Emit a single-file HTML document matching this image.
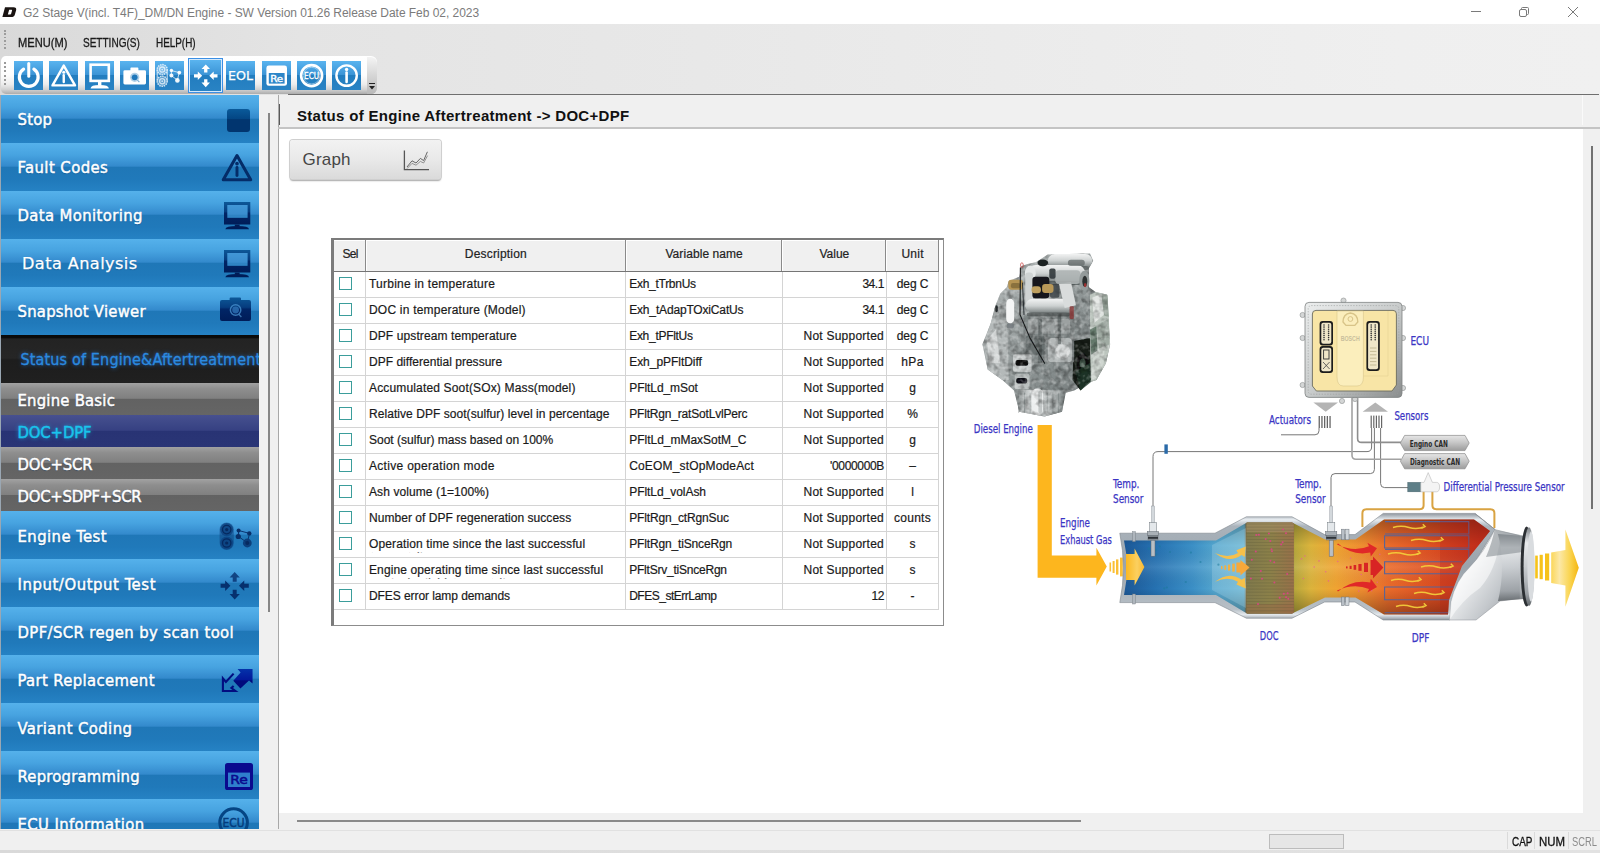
<!DOCTYPE html>
<html lang="en">
<head>
<meta charset="utf-8">
<title>G2 Stage V(incl. T4F)_DM/DN Engine</title>
<style>
*{box-sizing:border-box;margin:0;padding:0}
html,body{width:1600px;height:853px;overflow:hidden;background:#f0f0f0;font-family:"Liberation Sans","DejaVu Sans",sans-serif;}
.abs{position:absolute}
svg{display:block;overflow:visible}
#win{position:relative;width:1600px;height:853px;overflow:hidden;background:#f0f0f0}
#titlebar{left:0;top:0;width:1600px;height:24px;background:#fff}
#titletext{left:23px;top:6px;font-size:12px;line-height:15px;color:#7b7b7b;white-space:nowrap;letter-spacing:-0.042px}
#menubar{left:0;top:24px;width:1600px;height:71px;background:linear-gradient(to right,#d9d9d9 0,#e4e4e4 300px,#efefef 1400px,#f0f0f0 1600px)}
.menu{top:36px;font-size:12px;line-height:15px;color:#1a1a1a;white-space:nowrap;transform-origin:0 0;-webkit-text-stroke:0.3px #1a1a1a}
#toolbar{left:1px;top:56px;width:376px;height:38px;border-radius:5px 6px 6px 5px;background:linear-gradient(to bottom,#ffffff 0,#fdfdfd 50%,#ededed 74%,#d2d2d2 88%,#acacac 100%)}
.tb{top:61px;width:29px;height:29px;background:linear-gradient(to bottom,#5ab4ef 0,#3a93d5 49%,#227dbf 50%,#2983c4 100%)}
#sidebar{left:0;top:95px;width:259px;height:734px;overflow:hidden;background:#2380c2}
.it{left:0;width:259px;height:48px;background:linear-gradient(to bottom,#55b1eb 0,#47a3e0 25%,#3389cc 48.5%,#1f77b7 50%,#2079ba 75%,#2682c4 100%)}
.it span,.sub span{position:absolute;left:17.5px;white-space:nowrap;color:#fff;font-family:'DejaVu Sans Condensed','DejaVu Sans',sans-serif;font-size:16.5px;line-height:20px;top:15.4px;-webkit-text-stroke:.45px #fff;text-shadow:0 1px 1px rgba(0,40,90,.3)}
.sub{left:0;width:259px;height:32.3px;background:linear-gradient(to bottom,#a2a2a2 0,#8e8e8e 18%,#808080 48%,#626262 50%,#656565 100%)}
.sub span{top:7.8px}
.it svg{position:absolute}
.th{font-size:12px;line-height:15px;color:#222;-webkit-text-stroke:.2px #222;text-align:center;white-space:nowrap}
.td{font-size:12px;line-height:15px;color:#1a1a1a;-webkit-text-stroke:.2px #1a1a1a;white-space:nowrap}
.cb{width:13px;height:13px;border:1.4px solid #3b9d9b;background:#fff}
.sb{top:834.6px;font-size:12px;line-height:15px;white-space:nowrap;transform-origin:0 0}
/*MORECSS*/
</style>
</head>
<body>
<div id="win">
<div id="titlebar" class="abs"></div>
<svg class="abs" style="left:2px;top:6.2px" width="16" height="12.2" viewBox="0 0 17 13" preserveAspectRatio="none"><path d="M3.2 1.2 H12.2 Q15.8 1.2 15 4.4 L13.7 9 Q12.9 11.8 9.6 11.8 H0.4 Z M7.6 3.9 L6.2 9.1 H8.7 Q9.5 9.1 9.7 8.3 L10.7 4.7 Q10.9 3.9 10.1 3.9 Z" fill="#1a1412" fill-rule="evenodd"/></svg>
<div id="titletext" class="abs">G2 Stage V(incl. T4F)_DM/DN Engine - SW Version 01.26 Release Date Feb 02, 2023</div>
<svg class="abs" style="left:1460px;top:0" width="140" height="24" viewBox="0 0 140 24"><g fill="none" stroke="#7a7a7a" stroke-width="1"><path d="M11 11.5 H21"/><rect x="59.5" y="9.5" width="7" height="7" rx="1.5"/><path d="M61.5 9 V8.5 Q61.5 7.5 62.5 7.5 H67.5 Q68.5 7.5 68.5 8.5 V13.5 Q68.5 14.5 67.5 14.5 H67"/><path d="M108 7 L118 17 M118 7 L108 17"/></g></svg>
<div id="menubar" class="abs"></div>
<div class="abs" style="left:4.4px;top:29.6px;width:2px;height:19px;background:repeating-linear-gradient(to bottom,#9c9c9c 0,#9c9c9c 1.6px,transparent 1.6px,transparent 3.4px)"></div>
<div class="abs menu" id="m1" style="left:18px;transform:scaleX(.927)">MENU(M)</div>
<div class="abs menu" id="m2" style="left:83.4px;transform:scaleX(.835)">SETTING(S)</div>
<div class="abs menu" id="m3" style="left:156.4px;transform:scaleX(.825)">HELP(H)</div>
<div id="toolbar" class="abs"></div>
<div class="abs" style="left:367px;top:57px;width:10px;height:37px;border-radius:0 6px 6px 0;background:linear-gradient(to bottom,#f4f4f4 0,#dcdcdc 40%,#b9b9b9 100%)"></div>
<div class="abs" style="left:4.4px;top:62.4px;width:2px;height:23px;background:repeating-linear-gradient(to bottom,#9a9a9a 0,#9a9a9a 2px,transparent 2px,transparent 4.2px)"></div>
<svg class="abs" style="left:368px;top:83px" width="8" height="8" viewBox="0 0 8 8"><path d="M1 0.5 H7" stroke="#222" stroke-width="1"/><path d="M1 3 H7 L4 6.5 Z" fill="#222"/></svg>
<div class="abs tb" style="left:13.5px"></div>
<svg class="abs" style="left:13.5px;top:61px" width="29" height="29" viewBox="0 0 29 29"><path d="M9.6 8.2 A9.4 9.4 0 1 0 19.9 8.2" fill="none" stroke="#ffffff" stroke-width="3.2" stroke-linecap="round"/><path d="M14.75 2.6 V15.2" stroke="#ffffff" stroke-width="3" stroke-linecap="round"/></svg>
<div class="abs tb" style="left:49px"></div>
<svg class="abs" style="left:49px;top:61px" width="29" height="29" viewBox="0 0 29 29"><path d="M14.75 4.6 L26 24.4 H3.5 Z" fill="none" stroke="#ffffff" stroke-width="2.4" stroke-linejoin="round"/><circle cx="14.75" cy="11.2" r="1.5" fill="#ffffff"/><path d="M14.75 14.3 V21" stroke="#ffffff" stroke-width="2.4" stroke-linecap="round"/></svg>
<div class="abs tb" style="left:84.5px"></div>
<svg class="abs" style="left:84.5px;top:61px" width="29" height="29" viewBox="0 0 29 29"><rect x="5.6" y="3.7" width="18.2" height="16.2" fill="none" stroke="#ffffff" stroke-width="2.6"/><rect x="13" y="21" width="3.4" height="3.6" fill="#ffffff"/><path d="M5.6 27.4 Q5.6 24 14.7 24 Q23.8 24 23.8 27.4 Z" fill="#ffffff"/></svg>
<div class="abs tb" style="left:119.75px"></div>
<svg class="abs" style="left:119.75px;top:61px" width="29" height="29" viewBox="0 0 29 29"><path d="M10.4 9.2 V7.4 Q10.4 6.6 11.2 6.6 H17.6 Q18.4 6.6 18.4 7.4 V9.2 H24.6 Q26 9.2 26 10.6 V22 Q26 23.4 24.6 23.4 H4.8 Q3.4 23.4 3.4 22 V10.6 Q3.4 9.2 4.8 9.2 Z" fill="#ffffff"/><circle cx="14.7" cy="16.3" r="4.6" fill="#1f78bb" opacity=".35"/><circle cx="14.7" cy="16.3" r="2.9" fill="#1f78bb"/><path d="M17.6 19.4 L19.4 21.2" stroke="#1f78bb" stroke-width="1.2" opacity=".6"/></svg>
<div class="abs tb" style="left:155px"></div>
<svg class="abs" style="left:155px;top:61px" width="29" height="29" viewBox="0 0 29 29"><g fill="none" stroke="#ffffff" opacity="0.78"><circle cx="7.2" cy="8.6" r="5" fill="#ffffff" fill-opacity=".35" stroke-width="1.5" stroke-dasharray="1.5 .8"/><circle cx="7.2" cy="8.6" r="2.6" stroke-width="1.3"/><circle cx="7.2" cy="8.6" r="0.9" fill="#ffffff" stroke="none"/><circle cx="7.2" cy="20.2" r="5" fill="#ffffff" fill-opacity=".35" stroke-width="1.5" stroke-dasharray="1.5 .8"/><circle cx="7.2" cy="20.2" r="2.6" stroke-width="1.3"/><circle cx="7.2" cy="20.2" r="0.9" fill="#ffffff" stroke="none"/><path d="M2.2 8.6 V20.2 M12.2 8.6 V20.2" stroke-width="1"/><path d="M16.4 9.6 L24.2 11.6 M16.4 14.6 L22.4 19.2 M16.4 9.6 V14.6 M24.2 11.6 L22.4 19.2" stroke-width="0.9"/></g><g fill="#ffffff" opacity="0.93"><circle cx="16.4" cy="9.4" r="1.7"/><circle cx="16.4" cy="14.6" r="2"/><circle cx="24.3" cy="11.6" r="1.9"/><circle cx="22.4" cy="19.4" r="2.3"/></g></svg>
<div class="abs" style="left:187.5px;top:57.5px;width:35.5px;height:35.5px;border:1.5px solid #3c8fe4;background:#d5e9fb"></div>
<div class="abs tb" style="left:190px;top:60px;width:30.5px;height:30.5px"></div>
<svg class="abs" style="left:190.75px;top:60.75px" width="29" height="29" viewBox="0 0 29 29"><path d="M14.75 3.4 L19 8 H16.4 V11.4 H13.1 V8 H10.5 Z" fill="#ffffff" opacity="1"/><path d="M14.75 26.2 L19 21.6 H16.4 V18.2 H13.1 V21.6 H10.5 Z" fill="#ffffff"/><path d="M11.2 14.8 L6.8 10.5 V13.15 H3 V16.45 H6.8 V19.1 Z" fill="#ffffff"/><path d="M18.3 14.8 L22.7 10.5 V13.15 H26.5 V16.45 H22.7 V19.1 Z" fill="#ffffff"/></svg>
<div class="abs tb" style="left:226px"></div>
<svg class="abs" style="left:226px;top:61px" width="29" height="29" viewBox="0 0 29 29"><text x="14.6" y="19.2" text-anchor="middle" font-family="DejaVu Sans,Liberation Sans,sans-serif" font-size="12.5" textLength="25" lengthAdjust="spacingAndGlyphs" fill="#ffffff" stroke="#ffffff" stroke-width=".25">EOL</text></svg>
<div class="abs tb" style="left:261.5px"></div>
<svg class="abs" style="left:261.5px;top:61px" width="29" height="29" viewBox="0 0 29 29"><rect x="4.4" y="4.6" width="20.6" height="20.2" rx="2.4" fill="#ffffff"/><rect x="6.8" y="12" width="15.8" height="10.6" fill="#2d86c8"/><text x="14.7" y="20.6" text-anchor="middle" font-family="DejaVu Sans,Liberation Sans,sans-serif" font-size="8.8" textLength="13" lengthAdjust="spacingAndGlyphs" fill="#ffffff" stroke="#ffffff" stroke-width=".35">Re</text></svg>
<div class="abs tb" style="left:297px"></div>
<svg class="abs" style="left:297px;top:61px" width="29" height="29" viewBox="0 0 29 29"><circle cx="14.6" cy="14.6" r="10.5" fill="none" stroke="#ffffff" stroke-width="2.6"/><circle cx="14.6" cy="14.6" r="8.3" fill="none" stroke="#ffffff" stroke-width="0.6" opacity=".7"/><text x="14.6" y="17.7" text-anchor="middle" font-family="DejaVu Sans,Liberation Sans,sans-serif" font-size="8.4" textLength="15" lengthAdjust="spacingAndGlyphs" fill="#ffffff" stroke="#ffffff" stroke-width=".35">ECU</text></svg>
<div class="abs tb" style="left:332.25px"></div>
<svg class="abs" style="left:332.25px;top:61px" width="29" height="29" viewBox="0 0 29 29"><circle cx="14.6" cy="14.6" r="10.2" fill="none" stroke="#ffffff" stroke-width="2.4"/><circle cx="14.6" cy="8.4" r="1.7" fill="#ffffff"/><path d="M14.6 11.6 V21" stroke="#ffffff" stroke-width="2.6" stroke-linecap="round"/></svg>
<div id="sidebar" class="abs">
<div class="abs it" style="top:0px"><svg style="left:227px;top:14px" width="23" height="23" viewBox="0 0 23 23"><defs><linearGradient id="gstop" x1="0" y1="0" x2="0" y2="1"><stop offset="0" stop-color="#0a5a9a"/><stop offset=".44" stop-color="#034583"/><stop offset=".46" stop-color="#01356f"/><stop offset="1" stop-color="#01356f"/></linearGradient></defs><rect width="23" height="23" rx="3" fill="url(#gstop)"/></svg><span style="letter-spacing:0.21px">Stop</span></div>
<div class="abs it" style="top:48px"><svg style="left:219px;top:6.8px" width="35.38" height="35.38" viewBox="0 0 29 29"><path d="M14.75 4.6 L26 24.4 H3.5 Z" fill="none" stroke="#042c68" stroke-width="2.5" stroke-linejoin="round"/><circle cx="14.75" cy="11.2" r="1.5" fill="#042c68"/><path d="M14.75 14.3 V21" stroke="#042c68" stroke-width="2.4" stroke-linecap="round"/></svg><span style="letter-spacing:0.44px">Fault Codes</span></div>
<div class="abs it" style="top:96px"><svg style="left:223.7px;top:11.2px" width="26.30" height="27.20" viewBox="0 0 26.3 27.2"><defs><linearGradient id="gdk" x1="0" y1="0" x2="0" y2="1"><stop offset="0" stop-color="#0d5898"/><stop offset=".42" stop-color="#063c7e"/><stop offset=".5" stop-color="#012566"/><stop offset="1" stop-color="#001c58"/></linearGradient></defs><path d="M0 0 H26.3 V22.6 H0 Z M3.4 3.1 V15.8 H23.5 V3.1 Z" fill="url(#gdk)" fill-rule="evenodd"/><rect x="3.4" y="3.1" width="20.1" height="12.7" fill="#3f8fd0" opacity=".5"/><rect x="10.8" y="22.6" width="4.8" height="2" fill="#001c58"/><path d="M1.4 27.2 Q1.4 24 13.2 24 Q25 24 25 27.2 Z" fill="#001c58"/></svg><span style="letter-spacing:0.38px">Data Monitoring</span></div>
<div class="abs it" style="top:144px"><svg style="left:223.7px;top:11.2px" width="26.30" height="27.20" viewBox="0 0 26.3 27.2"><path d="M0 0 H26.3 V22.6 H0 Z M3.4 3.1 V15.8 H23.5 V3.1 Z" fill="url(#gdk)" fill-rule="evenodd"/><rect x="3.4" y="3.1" width="20.1" height="12.7" fill="#3f8fd0" opacity=".5"/><rect x="10.8" y="22.6" width="4.8" height="2" fill="#001c58"/><path d="M1.4 27.2 Q1.4 24 13.2 24 Q25 24 25 27.2 Z" fill="#001c58"/></svg><span style="left:22px;top:15px;font-family:'DejaVu Sans',sans-serif;font-size:16.1px;letter-spacing:.44px;-webkit-text-stroke:.25px #fff">Data Analysis</span></div>
<div class="abs it" style="top:192px"><svg style="left:220.4px;top:10.4px" width="31.00" height="24.00" viewBox="0 0 31 24"><path d="M9.6 3 V1.4 Q9.6 0.4 10.6 0.4 H20 Q21 0.4 21 1.4 V3 H29 Q31 3 31 5 V22 Q31 24 29 24 H2 Q0 24 0 22 V5 Q0 3 2 3 Z" fill="url(#gdk)"/><circle cx="15.6" cy="13" r="5.2" fill="none" stroke="#4a94d2" stroke-width="1.5" opacity=".75"/><circle cx="15.6" cy="13" r="3.4" fill="#2f74b8" opacity=".8"/><path d="M19 17.5 L21.4 20" stroke="#5aa2dc" stroke-width="1.4" opacity=".6"/></svg><span style="letter-spacing:0.25px">Snapshot Viewer</span></div>
<div class="abs" style="left:0;top:240px;width:259px;height:47.5px;background:linear-gradient(to bottom,#0a0a0a 0,#0c0c0c 6%,#232323 8%,#262626 48%,#1d1d1d 52%,#202020 100%)"><span id="sthead" style="position:absolute;left:20.5px;top:14.5px;letter-spacing:.15px;-webkit-text-stroke:.3px #2b8ae0;font-family:'DejaVu Sans Condensed','DejaVu Sans',sans-serif;font-size:16px;line-height:20px;white-space:nowrap;color:#2b8ae0;text-shadow:0 0 4px rgba(40,140,240,.8)">Status of Engine&amp;Aftertreatment</span></div>
<div class="abs sub" style="top:288px"><span style="letter-spacing:0.22px">Engine Basic</span></div>
<div class="abs sub" style="top:320.1px;background:linear-gradient(to bottom,#47508f 0,#3c4787 30%,#364082 48%,#283374 50%,#2a3576 100%)"><span style="color:#19c4ec;-webkit-text-stroke:.45px #19c4ec;text-shadow:0 0 4px rgba(30,200,250,.8);letter-spacing:-0.12px">DOC+DPF</span></div>
<div class="abs sub" style="top:352.2px"><span style="letter-spacing:-0.15px">DOC+SCR</span></div>
<div class="abs sub" style="top:384.3px"><span style="letter-spacing:-0.24px">DOC+SDPF+SCR</span></div>
<div class="abs it" style="top:416.4px"><svg style="left:218px;top:10px" width="36.00" height="30.00" viewBox="0 0 36 30"><g transform="translate(-218 -521)"><rect x="219.6" y="522.4" width="14.2" height="27.6" rx="7.1" fill="#0a3c78" opacity=".45"/><circle cx="226.7" cy="529.6" r="6.5" fill="#0b3f7e" opacity=".75"/><circle cx="226.7" cy="529.6" r="4.2" fill="none" stroke="#062a60" stroke-width="1.3"/><circle cx="226.7" cy="529.6" r="1.6" fill="#062a60"/><circle cx="226.7" cy="543" r="6.5" fill="#0b3f7e" opacity=".75"/><circle cx="226.7" cy="543" r="4.2" fill="none" stroke="#062a60" stroke-width="1.3"/><circle cx="226.7" cy="543" r="1.6" fill="#062a60"/><path d="M238.6 530.5 L249.5 533.4 L247.3 542.8 L238.3 536.3 Z M238.6 530.5 V536.3" fill="none" stroke="#0a3570" stroke-width="1"/><circle cx="238.6" cy="530.5" r="2" fill="#08306a"/><circle cx="249.3" cy="533.4" r="2.2" fill="#08306a"/><circle cx="238.3" cy="536.5" r="2.6" fill="#08306a"/><circle cx="247.3" cy="543" r="4.4" fill="#0a3874" opacity=".9"/><circle cx="247.3" cy="543" r="2" fill="#062a60"/></g></svg><span style="letter-spacing:0.44px">Engine Test</span></div>
<div class="abs it" style="top:464.4px"><svg style="left:217.3px;top:8.2px" width="34.80" height="34.80" viewBox="0 0 29 29"><path d="M14.75 3.4 L19 8 H16.4 V11.4 H13.1 V8 H10.5 Z" fill="#06306e" opacity="0.8"/><path d="M14.75 26.2 L19 21.6 H16.4 V18.2 H13.1 V21.6 H10.5 Z" fill="#06306e"/><path d="M11.2 14.8 L6.8 10.5 V13.15 H3 V16.45 H6.8 V19.1 Z" fill="#06306e"/><path d="M18.3 14.8 L22.7 10.5 V13.15 H26.5 V16.45 H22.7 V19.1 Z" fill="#06306e"/></svg><span style="letter-spacing:0.58px">Input/Output Test</span></div>
<div class="abs it" style="top:512.4px"><span style="letter-spacing:0.39px">DPF/SCR regen by scan tool</span></div>
<div class="abs it" style="top:560.4px"><svg style="left:221px;top:12.4px" width="32.00" height="26.00" viewBox="0 0 32 26"><defs><linearGradient id="gpart" x1="0" y1="0" x2="0" y2="1"><stop offset="0" stop-color="#0432aa"/><stop offset=".55" stop-color="#02189a"/><stop offset=".6" stop-color="#000a7c"/><stop offset="1" stop-color="#000a7c"/></linearGradient></defs><path d="M16.55 1.1 H31.55 V15.6 L28 12.6 L19.4 20.6 L12.3 12.8 L19.6 4.6 Z" fill="url(#gpart)"/><path d="M12.6 5.6 L4.9 14 L1.9 10.4 V23 H14.4 L10.4 20 L12.6 18" fill="none" stroke="#020c80" stroke-width="2.1" stroke-linejoin="miter"/></svg><span style="letter-spacing:0.37px">Part Replacement</span></div>
<div class="abs it" style="top:608.4px"><span style="letter-spacing:0.41px">Variant Coding</span></div>
<div class="abs it" style="top:656.4px"><svg style="left:225px;top:11.6px" width="28.00" height="27.00" viewBox="0 0 28 27"><rect x="0" y="0" width="28" height="27" rx="2.6" fill="#0a0a8e"/><rect x="3" y="9.6" width="22" height="14.4" fill="#2f7fcc"/><text x="14" y="21" text-anchor="middle" font-family="DejaVu Sans,Liberation Sans,sans-serif" font-size="11.5" textLength="17.6" lengthAdjust="spacingAndGlyphs" fill="#0a0a8e" stroke="#0a0a8e" stroke-width=".5">Re</text></svg><span style="letter-spacing:0.22px">Reprogramming</span></div>
<div class="abs it" style="top:704.4px"><svg style="left:218px;top:8px" width="32.00" height="32.00" viewBox="0 0 32 32"><circle cx="15.6" cy="15.6" r="13.8" fill="none" stroke="#054584" stroke-width="3"/><text x="15.6" y="20.4" text-anchor="middle" font-family="DejaVu Sans,Liberation Sans,sans-serif" font-size="12.4" textLength="22" lengthAdjust="spacingAndGlyphs" fill="#043c7c" stroke="#043c7c" stroke-width=".5">ECU</text></svg><span style="letter-spacing:0.39px">ECU Information</span></div>
</div>
<div class="abs" style="left:0;top:95px;width:1px;height:734px;background:#9aa7b3"></div>
<div class="abs" style="left:267.5px;top:113px;width:2px;height:499px;background:#868686"></div>
<div class="abs" style="left:288px;top:94px;width:1311px;height:1.4px;background:#6f6f6f"></div>
<div class="abs" style="left:278px;top:95px;width:1px;height:734px;background:#a8a8a8"></div>
<div class="abs" style="left:279px;top:104px;width:1.4px;height:21px;background:#5a5a5a"></div>
<div class="abs" style="left:1582px;top:95px;width:1px;height:30px;background:#fafafa"></div>
<div id="hdr" class="abs" style="left:297px;top:107px;font-size:15px;line-height:18px;font-weight:bold;color:#111;white-space:nowrap;letter-spacing:.31px">Status of Engine Aftertreatment -&gt; DOC+DPF</div>
<div class="abs" style="left:278px;top:127px;width:1322px;height:2px;background:#c4c4c4"></div>
<div class="abs" style="left:279px;top:128.9px;width:1304px;height:684.6px;background:#fff"></div>
<div class="abs" style="left:1590.5px;top:146px;width:2px;height:363px;background:#727272"></div>
<div class="abs" style="left:297px;top:820px;width:784px;height:2px;background:#8a8a8a"></div>
<div class="abs" style="left:290px;top:139.5px;width:151px;height:39.6px;border-radius:3px;background:linear-gradient(to bottom,#f2f2f2 0,#e9e9e9 50%,#dadada 100%);box-shadow:0 0 0 1px #cfcfcf,0 1.5px 1.5px rgba(0,0,0,.35)"></div>
<div id="graph" class="abs" style="left:302.5px;top:150px;font-size:17px;line-height:20px;color:#454545;white-space:nowrap;letter-spacing:.2px">Graph</div>
<svg class="abs" style="left:403px;top:150px" width="27" height="21" viewBox="0 0 27 21"><path d="M1.4 0.6 V19.6 H26" fill="none" stroke="#555" stroke-width="1.3"/><path d="M4 17 L9 10.8 L13 13 L17.4 8.4 L20.6 10.6 L24.4 1.8" fill="none" stroke="#666" stroke-width="1"/><path d="M4 18.6 L9 13.4 L13 15.2 L17.4 11.4 L20.6 13 L24.6 5.6" fill="none" stroke="#888" stroke-width=".9"/></svg>
<div class="abs" style="left:331.2px;top:237.9px;width:612.6px;height:388.5px;background:#fff;border-style:solid;border-color:#7b7b7b #8c8c8c #8c8c8c #7b7b7b;border-width:2.9px 1.5px 1.5px 3.1px"></div>
<div class="abs" style="left:334.3px;top:240.8px;width:604.5px;height:30.2px;background:#f0f0f0"></div>
<div class="abs" style="left:334.3px;top:270.9px;width:604.5px;height:1.3px;background:#757575"></div>
<div class="abs th" style="left:334.3px;width:31.599999999999966px;top:246.5px;letter-spacing:-0.68px">Sel</div>
<div class="abs th" style="left:365.9px;width:260.0px;top:246.5px;letter-spacing:0.19px">Description</div>
<div class="abs th" style="left:625.9px;width:156.5px;top:246.5px;letter-spacing:0.07px">Variable name</div>
<div class="abs th" style="left:782.4px;width:104.0px;top:246.5px;letter-spacing:0px">Value</div>
<div class="abs th" style="left:886.4px;width:52.39999999999998px;top:246.5px;letter-spacing:0.24px">Unit</div>
<div class="abs" style="left:364.7px;top:240px;width:1.2px;height:31px;background:#8a8a8a"></div><div class="abs" style="left:365.9px;top:240px;width:1px;height:31px;background:#fff"></div>
<div class="abs" style="left:365.29999999999995px;top:272px;width:1px;height:338px;background:#d4d4d4"></div>
<div class="abs" style="left:624.6999999999999px;top:240px;width:1.2px;height:31px;background:#8a8a8a"></div><div class="abs" style="left:625.9px;top:240px;width:1px;height:31px;background:#fff"></div>
<div class="abs" style="left:625.3px;top:272px;width:1px;height:338px;background:#d4d4d4"></div>
<div class="abs" style="left:781.1999999999999px;top:240px;width:1.2px;height:31px;background:#8a8a8a"></div><div class="abs" style="left:782.4px;top:240px;width:1px;height:31px;background:#fff"></div>
<div class="abs" style="left:781.8px;top:272px;width:1px;height:338px;background:#d4d4d4"></div>
<div class="abs" style="left:885.1999999999999px;top:240px;width:1.2px;height:31px;background:#8a8a8a"></div><div class="abs" style="left:886.4px;top:240px;width:1px;height:31px;background:#fff"></div>
<div class="abs" style="left:885.8px;top:272px;width:1px;height:338px;background:#d4d4d4"></div>
<div class="abs" style="left:937.5999999999999px;top:240px;width:1.2px;height:31px;background:#8a8a8a"></div><div class="abs" style="left:938.8px;top:240px;width:1px;height:31px;background:#fff"></div>
<div class="abs" style="left:938.1999999999999px;top:272px;width:1px;height:338px;background:#d4d4d4"></div>
<div class="abs" style="left:334px;top:296.6px;width:604px;height:1px;background:#d4d4d4"></div>
<div class="abs cb" style="left:338.8px;top:276.6px"></div>
<div class="abs td" style="left:369px;top:277px;letter-spacing:0.234px">Turbine in temperature</div>
<div class="abs td" style="left:629.2px;top:277px;letter-spacing:-0.272px">Exh_tTrbnUs</div>
<div class="abs td" style="left:783px;width:101px;text-align:right;top:277px;letter-spacing:-0.440px">34.1</div>
<div class="abs td" style="left:886.5px;width:52px;text-align:center;top:277px;letter-spacing:-0.106px">deg C</div>
<div class="abs" style="left:334px;top:322.6px;width:604px;height:1px;background:#d4d4d4"></div>
<div class="abs cb" style="left:338.8px;top:302.6px"></div>
<div class="abs td" style="left:369px;top:303px;letter-spacing:0.208px">DOC in temperature (Model)</div>
<div class="abs td" style="left:629.2px;top:303px;letter-spacing:-0.165px">Exh_tAdapTOxiCatUs</div>
<div class="abs td" style="left:783px;width:101px;text-align:right;top:303px;letter-spacing:-0.440px">34.1</div>
<div class="abs td" style="left:886.5px;width:52px;text-align:center;top:303px;letter-spacing:-0.106px">deg C</div>
<div class="abs" style="left:334px;top:348.6px;width:604px;height:1px;background:#d4d4d4"></div>
<div class="abs cb" style="left:338.8px;top:328.6px"></div>
<div class="abs td" style="left:369px;top:329px;letter-spacing:0.100px">DPF upstream temperature</div>
<div class="abs td" style="left:629.2px;top:329px;letter-spacing:-0.290px">Exh_tPFltUs</div>
<div class="abs td" style="left:783px;width:101px;text-align:right;top:329px;letter-spacing:0.239px">Not Supported</div>
<div class="abs td" style="left:886.5px;width:52px;text-align:center;top:329px;letter-spacing:-0.106px">deg C</div>
<div class="abs" style="left:334px;top:374.6px;width:604px;height:1px;background:#d4d4d4"></div>
<div class="abs cb" style="left:338.8px;top:354.6px"></div>
<div class="abs td" style="left:369px;top:355px;letter-spacing:0.023px">DPF differential pressure</div>
<div class="abs td" style="left:629.2px;top:355px;letter-spacing:-0.035px">Exh_pPFltDiff</div>
<div class="abs td" style="left:783px;width:101px;text-align:right;top:355px;letter-spacing:0.239px">Not Supported</div>
<div class="abs td" style="left:886.5px;width:52px;text-align:center;top:355px;letter-spacing:0.380px">hPa</div>
<div class="abs" style="left:334px;top:400.6px;width:604px;height:1px;background:#d4d4d4"></div>
<div class="abs cb" style="left:338.8px;top:380.6px"></div>
<div class="abs td" style="left:369px;top:381px;letter-spacing:0.157px">Accumulated Soot(SOx) Mass(model)</div>
<div class="abs td" style="left:629.2px;top:381px;letter-spacing:-0.061px">PFltLd_mSot</div>
<div class="abs td" style="left:783px;width:101px;text-align:right;top:381px;letter-spacing:0.239px">Not Supported</div>
<div class="abs td" style="left:886.5px;width:52px;text-align:center;top:381px;letter-spacing:0.000px">g</div>
<div class="abs" style="left:334px;top:426.6px;width:604px;height:1px;background:#d4d4d4"></div>
<div class="abs cb" style="left:338.8px;top:406.6px"></div>
<div class="abs td" style="left:369px;top:407px;letter-spacing:0.053px">Relative DPF soot(sulfur) level in percentage</div>
<div class="abs td" style="left:629.2px;top:407px;letter-spacing:-0.184px">PFltRgn_ratSotLvlPerc</div>
<div class="abs td" style="left:783px;width:101px;text-align:right;top:407px;letter-spacing:0.239px">Not Supported</div>
<div class="abs td" style="left:886.5px;width:52px;text-align:center;top:407px;letter-spacing:0.000px">%</div>
<div class="abs" style="left:334px;top:452.6px;width:604px;height:1px;background:#d4d4d4"></div>
<div class="abs cb" style="left:338.8px;top:432.6px"></div>
<div class="abs td" style="left:369px;top:433px;letter-spacing:0.003px">Soot (sulfur) mass based on 100%</div>
<div class="abs td" style="left:629.2px;top:433px;letter-spacing:-0.010px">PFltLd_mMaxSotM_C</div>
<div class="abs td" style="left:783px;width:101px;text-align:right;top:433px;letter-spacing:0.239px">Not Supported</div>
<div class="abs td" style="left:886.5px;width:52px;text-align:center;top:433px;letter-spacing:0.000px">g</div>
<div class="abs" style="left:334px;top:478.6px;width:604px;height:1px;background:#d4d4d4"></div>
<div class="abs cb" style="left:338.8px;top:458.6px"></div>
<div class="abs td" style="left:369px;top:459px;letter-spacing:0.304px">Active operation mode</div>
<div class="abs td" style="left:629.2px;top:459px;letter-spacing:0.162px">CoEOM_stOpModeAct</div>
<div class="abs td" style="left:783px;width:101px;text-align:right;top:459px;letter-spacing:-0.335px">'0000000B</div>
<div class="abs td" style="left:886.5px;width:52px;text-align:center;top:459px;letter-spacing:0.000px">–</div>
<div class="abs" style="left:334px;top:504.6px;width:604px;height:1px;background:#d4d4d4"></div>
<div class="abs cb" style="left:338.8px;top:484.6px"></div>
<div class="abs td" style="left:369px;top:485px;letter-spacing:0.094px">Ash volume (1=100%)</div>
<div class="abs td" style="left:629.2px;top:485px;letter-spacing:-0.044px">PFltLd_volAsh</div>
<div class="abs td" style="left:783px;width:101px;text-align:right;top:485px;letter-spacing:0.239px">Not Supported</div>
<div class="abs td" style="left:886.5px;width:52px;text-align:center;top:485px;letter-spacing:0.000px">l</div>
<div class="abs" style="left:334px;top:530.6px;width:604px;height:1px;background:#d4d4d4"></div>
<div class="abs cb" style="left:338.8px;top:510.6px"></div>
<div class="abs td" style="left:369px;top:511px;letter-spacing:0.042px">Number of DPF regeneration success</div>
<div class="abs td" style="left:629.2px;top:511px;letter-spacing:-0.153px">PFltRgn_ctRgnSuc</div>
<div class="abs td" style="left:783px;width:101px;text-align:right;top:511px;letter-spacing:0.239px">Not Supported</div>
<div class="abs td" style="left:886.5px;width:52px;text-align:center;top:511px;letter-spacing:0.240px">counts</div>
<div class="abs" style="left:334px;top:556.6px;width:604px;height:1px;background:#d4d4d4"></div>
<div class="abs cb" style="left:338.8px;top:536.6px"></div>
<div class="abs td" style="left:369px;top:537px;letter-spacing:0.119px">Operation time since the last successful</div>
<div class="abs td" style="left:629.2px;top:537px;letter-spacing:-0.152px">PFltRgn_tiSnceRgn</div>
<div class="abs td" style="left:783px;width:101px;text-align:right;top:537px;letter-spacing:0.239px">Not Supported</div>
<div class="abs td" style="left:886.5px;width:52px;text-align:center;top:537px;letter-spacing:0.000px">s</div>
<div class="abs" style="left:334px;top:582.6px;width:604px;height:1px;background:#d4d4d4"></div>
<div class="abs cb" style="left:338.8px;top:562.6px"></div>
<div class="abs td" style="left:369px;top:563px;letter-spacing:0.110px">Engine operating time since last successful</div>
<div class="abs td" style="left:629.2px;top:563px;letter-spacing:-0.222px">PFltSrv_tiSnceRgn</div>
<div class="abs td" style="left:783px;width:101px;text-align:right;top:563px;letter-spacing:0.239px">Not Supported</div>
<div class="abs td" style="left:886.5px;width:52px;text-align:center;top:563px;letter-spacing:0.000px">s</div>
<div class="abs" style="left:334px;top:608.6px;width:604px;height:1px;background:#d4d4d4"></div>
<div class="abs cb" style="left:338.8px;top:588.6px"></div>
<div class="abs td" style="left:369px;top:589px;letter-spacing:-0.075px">DFES error lamp demands</div>
<div class="abs td" style="left:629.2px;top:589px;letter-spacing:-0.488px">DFES_stErrLamp</div>
<div class="abs td" style="left:783px;width:101px;text-align:right;top:589px;letter-spacing:-0.480px">12</div>
<div class="abs td" style="left:886.5px;width:52px;text-align:center;top:589px;letter-spacing:0.000px">-</div>
<div class="abs" style="left:368.6px;top:551.5px;width:200px;height:1.7px;overflow:hidden"><div class="td" style="position:relative;top:-2.5px;color:#777">regeneration</div></div>
<div class="abs" style="left:368.6px;top:577.5px;width:200px;height:1.7px;overflow:hidden"><div class="td" style="position:relative;top:-2.5px;color:#777">service(switch) regeneration</div></div>
<svg class="abs" style="left:960px;top:235px" width="625" height="430" viewBox="960 235 625 430">
<defs>
<linearGradient id="shell" x1="0" y1="0" x2="0" y2="1"><stop offset="0" stop-color="#8f979f"/><stop offset=".06" stop-color="#e8edf1"/><stop offset=".12" stop-color="#aab3bb"/><stop offset=".5" stop-color="#9aa3ab"/><stop offset=".9" stop-color="#b8c0c7"/><stop offset=".95" stop-color="#e4e9ed"/><stop offset="1" stop-color="#8f979f"/></linearGradient>
<linearGradient id="gas" gradientUnits="userSpaceOnUse" x1="1120" y1="0" x2="1480" y2="0">
<stop offset="0" stop-color="#1b5594"/><stop offset=".1" stop-color="#2672b2"/><stop offset=".2" stop-color="#3b8fc6"/><stop offset=".27" stop-color="#56a8d0"/><stop offset=".345" stop-color="#6ab6d4"/>
<stop offset=".352" stop-color="#8c6c3c"/><stop offset=".48" stop-color="#8a6a40"/><stop offset=".485" stop-color="#b8a83c"/><stop offset=".53" stop-color="#dcb43c"/><stop offset=".6" stop-color="#f0a432"/><stop offset=".68" stop-color="#ee8a30"/><stop offset=".75" stop-color="#ea6a2a"/><stop offset=".88" stop-color="#dc4c20"/><stop offset="1" stop-color="#c8321a"/></linearGradient>
<linearGradient id="vshade" x1="0" y1="0" x2="0" y2="1"><stop offset="0" stop-color="#000" stop-opacity=".38"/><stop offset=".3" stop-color="#000" stop-opacity="0"/><stop offset=".5" stop-color="#fff" stop-opacity=".1"/><stop offset=".7" stop-color="#000" stop-opacity="0"/><stop offset="1" stop-color="#000" stop-opacity=".38"/></linearGradient>
<linearGradient id="silver" x1="0" y1="0" x2="1" y2="1"><stop offset="0" stop-color="#d6dade"/><stop offset=".35" stop-color="#f6f7f8"/><stop offset=".7" stop-color="#c4c8cc"/><stop offset="1" stop-color="#8e9398"/></linearGradient>
<linearGradient id="silver2" x1="0" y1="0" x2="0" y2="1"><stop offset="0" stop-color="#7d8287"/><stop offset=".2" stop-color="#e9ebed"/><stop offset=".5" stop-color="#c9cdd1"/><stop offset=".85" stop-color="#9a9fa4"/><stop offset="1" stop-color="#5f6468"/></linearGradient>
<linearGradient id="yarrow" x1="0" y1="0" x2="1" y2="0"><stop offset="0" stop-color="#fbd75a"/><stop offset=".3" stop-color="#fce8a6"/><stop offset=".65" stop-color="#fad656"/><stop offset="1" stop-color="#f5b60e"/></linearGradient>
<linearGradient id="yin" x1="0" y1="0" x2="1" y2="0"><stop offset="0" stop-color="#fbb820"/><stop offset=".6" stop-color="#fbd060"/><stop offset="1" stop-color="#f8b832"/></linearGradient>
<linearGradient id="ecuframe" x1="0" y1="0" x2="1" y2="1"><stop offset="0" stop-color="#eceeee"/><stop offset=".5" stop-color="#c9cccc"/><stop offset="1" stop-color="#8a8d8d"/></linearGradient>
<linearGradient id="brick" x1="0" y1="0" x2="1" y2="0"><stop offset="0" stop-color="#80794c"/><stop offset=".5" stop-color="#8b8049"/><stop offset="1" stop-color="#98704a"/></linearGradient>
<linearGradient id="can" x1="0" y1="0" x2="0" y2="1"><stop offset="0" stop-color="#e6e6e6"/><stop offset=".5" stop-color="#c4c4c4"/><stop offset="1" stop-color="#9c9c9c"/></linearGradient>
<filter id="b1" x="-10%" y="-10%" width="120%" height="120%"><feGaussianBlur stdDeviation="1.1"/></filter>
<filter id="b2" x="-10%" y="-10%" width="120%" height="120%"><feGaussianBlur stdDeviation="0.6"/></filter>
<clipPath id="inner"><path id="innerp" d="M1124 540.5 H1216 L1247 522.4 H1292 L1325 539.4 H1355.5 L1384 519.6 H1474 L1490 531 L1462 566 L1449 600 L1448 614.6 H1384 L1355.5 597.6 H1325 L1292 613.4 H1247 L1216 595 H1124 Q1130 567 1124 540.5 Z"/></clipPath>
</defs>
<path d="M1037.6 425 H1051.8 V555.4 H1096.4 V547.8 L1106.8 566.6 L1096.4 585.6 V577.8 H1037.6 Z" fill="#fdb61e"/>
<rect x="1109.5" y="562.5" width="1.6" height="9.0" fill="#fbbf34"/><rect x="1112.6" y="561" width="2" height="12" fill="#fbbf34"/><rect x="1116" y="559.4" width="2.4" height="15.2" fill="#fbbf34"/><rect x="1120" y="557.6" width="2.8" height="18.8" fill="#fbbf34"/><rect x="1124.4" y="555.6" width="3.4" height="22.8" fill="#fbbf34"/><path d="M1119.8 533.2 H1215 L1246.4 516.8 H1292 L1324.6 534.6 H1355 L1383.2 513.4 H1475 L1495 529.5 L1470 570 L1452 605 L1450 620 H1383.2 L1355 602 H1324.6 L1292 618.2 H1246.4 L1215 602.6 H1119.8 Q1127 568 1119.8 533.2 Z" fill="url(#shell)" stroke="#7d858c" stroke-width=".6"/>
<g clip-path="url(#inner)"><rect x="1118" y="510" width="380" height="115" fill="url(#gas)"/><rect x="1118" y="513" width="380" height="108" fill="url(#vshade)"/>
<path d="M1212 545 L1246 528 V608 L1212 590 Z" fill="#cfeaf2" opacity=".22"/><rect x="1246.4" y="520" width="47.4" height="96" fill="url(#brick)"/><rect x="1246.4" y="520" width="47.4" height="12" fill="#a8906a" opacity=".55"/><rect x="1246.4" y="604" width="47.4" height="12" fill="#9a6848" opacity=".45"/><path d="M1246.4 524.0 H1293.8" stroke="#5e5a3a" stroke-width=".5" opacity=".6"/><path d="M1246.4 527.1 H1293.8" stroke="#5e5a3a" stroke-width=".5" opacity=".6"/><path d="M1246.4 530.2 H1293.8" stroke="#5e5a3a" stroke-width=".5" opacity=".6"/><path d="M1246.4 533.3 H1293.8" stroke="#5e5a3a" stroke-width=".5" opacity=".6"/><path d="M1246.4 536.4 H1293.8" stroke="#5e5a3a" stroke-width=".5" opacity=".6"/><path d="M1246.4 539.5 H1293.8" stroke="#5e5a3a" stroke-width=".5" opacity=".6"/><path d="M1246.4 542.6 H1293.8" stroke="#5e5a3a" stroke-width=".5" opacity=".6"/><path d="M1246.4 545.7 H1293.8" stroke="#5e5a3a" stroke-width=".5" opacity=".6"/><path d="M1246.4 548.8 H1293.8" stroke="#5e5a3a" stroke-width=".5" opacity=".6"/><path d="M1246.4 551.9 H1293.8" stroke="#5e5a3a" stroke-width=".5" opacity=".6"/><path d="M1246.4 555.0 H1293.8" stroke="#5e5a3a" stroke-width=".5" opacity=".6"/><path d="M1246.4 558.1 H1293.8" stroke="#5e5a3a" stroke-width=".5" opacity=".6"/><path d="M1246.4 561.2 H1293.8" stroke="#5e5a3a" stroke-width=".5" opacity=".6"/><path d="M1246.4 564.3 H1293.8" stroke="#5e5a3a" stroke-width=".5" opacity=".6"/><path d="M1246.4 567.4 H1293.8" stroke="#5e5a3a" stroke-width=".5" opacity=".6"/><path d="M1246.4 570.5 H1293.8" stroke="#5e5a3a" stroke-width=".5" opacity=".6"/><path d="M1246.4 573.6 H1293.8" stroke="#5e5a3a" stroke-width=".5" opacity=".6"/><path d="M1246.4 576.7 H1293.8" stroke="#5e5a3a" stroke-width=".5" opacity=".6"/><path d="M1246.4 579.8 H1293.8" stroke="#5e5a3a" stroke-width=".5" opacity=".6"/><path d="M1246.4 582.9 H1293.8" stroke="#5e5a3a" stroke-width=".5" opacity=".6"/><path d="M1246.4 586.0 H1293.8" stroke="#5e5a3a" stroke-width=".5" opacity=".6"/><path d="M1246.4 589.1 H1293.8" stroke="#5e5a3a" stroke-width=".5" opacity=".6"/><path d="M1246.4 592.2 H1293.8" stroke="#5e5a3a" stroke-width=".5" opacity=".6"/><path d="M1246.4 595.3 H1293.8" stroke="#5e5a3a" stroke-width=".5" opacity=".6"/><path d="M1246.4 598.4 H1293.8" stroke="#5e5a3a" stroke-width=".5" opacity=".6"/><path d="M1246.4 601.5 H1293.8" stroke="#5e5a3a" stroke-width=".5" opacity=".6"/><path d="M1246.4 604.6 H1293.8" stroke="#5e5a3a" stroke-width=".5" opacity=".6"/><path d="M1246.4 607.7 H1293.8" stroke="#5e5a3a" stroke-width=".5" opacity=".6"/><path d="M1246.4 610.8 H1293.8" stroke="#5e5a3a" stroke-width=".5" opacity=".6"/><path d="M1246.4 613.9 H1293.8" stroke="#5e5a3a" stroke-width=".5" opacity=".6"/><circle cx="1258.9" cy="534.7" r="1" fill="#e0408a" opacity=".85"/><circle cx="1265.6" cy="539.0" r="1" fill="#e0408a" opacity=".85"/><circle cx="1251.8" cy="559.7" r="1" fill="#e0408a" opacity=".85"/><circle cx="1287.6" cy="593.2" r="1" fill="#e0408a" opacity=".85"/><circle cx="1281.1" cy="544.6" r="1" fill="#e0408a" opacity=".85"/><circle cx="1271.5" cy="549.2" r="1" fill="#e0408a" opacity=".85"/><circle cx="1256.3" cy="534.9" r="1" fill="#e0408a" opacity=".85"/><circle cx="1258.0" cy="603.9" r="1" fill="#e0408a" opacity=".85"/><circle cx="1283.8" cy="593.8" r="1" fill="#e0408a" opacity=".85"/><circle cx="1282.6" cy="542.2" r="1" fill="#e0408a" opacity=".85"/><circle cx="1262.0" cy="578.7" r="1" fill="#e0408a" opacity=".85"/><circle cx="1279.7" cy="597.8" r="1" fill="#e0408a" opacity=".85"/><circle cx="1286.0" cy="533.3" r="1" fill="#e0408a" opacity=".85"/><circle cx="1274.4" cy="582.4" r="1" fill="#e0408a" opacity=".85"/><circle cx="1270.3" cy="540.9" r="1" fill="#e0408a" opacity=".85"/><circle cx="1268.9" cy="533.5" r="1" fill="#e0408a" opacity=".85"/><circle cx="1288.3" cy="598.7" r="1" fill="#e0408a" opacity=".85"/><circle cx="1272.0" cy="551.2" r="1" fill="#e0408a" opacity=".85"/><circle cx="1287.2" cy="574.1" r="1" fill="#e0408a" opacity=".85"/><circle cx="1286.1" cy="597.2" r="1" fill="#e0408a" opacity=".85"/><circle cx="1270.4" cy="560.8" r="1" fill="#e0408a" opacity=".85"/><circle cx="1274.2" cy="562.2" r="1" fill="#e0408a" opacity=".85"/><circle cx="1255.8" cy="551.6" r="1" fill="#e0408a" opacity=".85"/><circle cx="1283.1" cy="529.6" r="1" fill="#e0408a" opacity=".85"/><circle cx="1250.9" cy="578.6" r="1" fill="#e0408a" opacity=".85"/><circle cx="1260.8" cy="570.9" r="1" fill="#e0408a" opacity=".85"/><circle cx="1337.7" cy="561.5" r=".8" fill="#e85aa0" opacity=".7"/><circle cx="1379.8" cy="554.4" r=".8" fill="#e85aa0" opacity=".7"/><circle cx="1333.0" cy="554.7" r=".8" fill="#e85aa0" opacity=".7"/><circle cx="1350.6" cy="558.3" r=".8" fill="#e85aa0" opacity=".7"/><circle cx="1328.5" cy="580.9" r=".8" fill="#e85aa0" opacity=".7"/><circle cx="1325.7" cy="571.8" r=".8" fill="#e85aa0" opacity=".7"/><circle cx="1372.3" cy="549.8" r=".8" fill="#e85aa0" opacity=".7"/><circle cx="1304.9" cy="556.0" r=".8" fill="#e85aa0" opacity=".7"/><circle cx="1361.2" cy="574.5" r=".8" fill="#e85aa0" opacity=".7"/><circle cx="1319.0" cy="560.9" r=".8" fill="#e85aa0" opacity=".7"/><circle cx="1314.2" cy="567.0" r=".8" fill="#e85aa0" opacity=".7"/><circle cx="1303.4" cy="578.5" r=".8" fill="#e85aa0" opacity=".7"/><circle cx="1371.7" cy="590.8" r=".8" fill="#e85aa0" opacity=".7"/><circle cx="1358.8" cy="591.1" r=".8" fill="#e85aa0" opacity=".7"/><circle cx="1301.5" cy="558.9" r=".8" fill="#e85aa0" opacity=".7"/><circle cx="1377.3" cy="582.2" r=".8" fill="#e85aa0" opacity=".7"/><circle cx="1166.9" cy="587.5" r="1.1" fill="#1c7a9a" opacity=".55"/><circle cx="1185.8" cy="582.0" r="1.1" fill="#1c7a9a" opacity=".55"/><circle cx="1156.4" cy="554.4" r="1.1" fill="#1c7a9a" opacity=".55"/><circle cx="1170.0" cy="552.0" r="1.1" fill="#1c7a9a" opacity=".55"/><circle cx="1164.3" cy="588.3" r="1.1" fill="#1c7a9a" opacity=".55"/><circle cx="1159.8" cy="546.4" r="1.1" fill="#1c7a9a" opacity=".55"/><circle cx="1134.0" cy="553.5" r="1.1" fill="#1c7a9a" opacity=".55"/><circle cx="1200.5" cy="562.0" r="1.1" fill="#1c7a9a" opacity=".55"/><circle cx="1156.1" cy="550.3" r="1.1" fill="#1c7a9a" opacity=".55"/><circle cx="1218.4" cy="564.7" r="1.1" fill="#1c7a9a" opacity=".55"/><circle cx="1148.7" cy="548.6" r="1.1" fill="#1c7a9a" opacity=".55"/><circle cx="1135.0" cy="553.4" r="1.1" fill="#1c7a9a" opacity=".55"/><circle cx="1190.9" cy="552.6" r="1.1" fill="#1c7a9a" opacity=".55"/><circle cx="1133.7" cy="567.6" r="1.1" fill="#1c7a9a" opacity=".55"/><g fill="none" stroke="#56649a" stroke-width="1.1"><path d="M1385 521.6 H1468.8 V534 H1385"/><path d="M1468.8 548 H1384.6 V535.8 H1468.8 Z"/><path d="M1385 549.4 H1468.8 V560.4"/><path d="M1458 573.8 H1384.6 V561.8 H1462"/><path d="M1453 599.8 H1384.6 V587 H1456"/><path d="M1384.6 612.8 H1450"/></g><path d="M1440 519 H1476 L1492 531 L1462 566 L1449 600 V616 H1440 Z" fill="#b0201a" opacity=".25"/><path d="M1393 527.5 q8.0 -2.6 16.0 0 t16.0 -1 l-2.2 -2.2 m2.2 2.2 l-3 1.6" fill="none" stroke="#f4d23c" stroke-width="1.5" opacity=".9"/><path d="M1411 540.5 q8.0 -2.6 16.0 0 t16.0 -1 l-2.2 -2.2 m2.2 2.2 l-3 1.6" fill="none" stroke="#f4d23c" stroke-width="1.5" opacity=".9"/><path d="M1388 554 q8.0 -2.6 16.0 0 t16.0 -1 l-2.2 -2.2 m2.2 2.2 l-3 1.6" fill="none" stroke="#f4d23c" stroke-width="1.5" opacity=".9"/><path d="M1421 567 q8.0 -2.6 16.0 0 t16.0 -1 l-2.2 -2.2 m2.2 2.2 l-3 1.6" fill="none" stroke="#f4d23c" stroke-width="1.5" opacity=".9"/><path d="M1391 580.5 q7.5 -2.6 15.0 0 t15.0 -1 l-2.2 -2.2 m2.2 2.2 l-3 1.6" fill="none" stroke="#f4d23c" stroke-width="1.5" opacity=".9"/><path d="M1414 593.5 q7.5 -2.6 15.0 0 t15.0 -1 l-2.2 -2.2 m2.2 2.2 l-3 1.6" fill="none" stroke="#f4d23c" stroke-width="1.5" opacity=".9"/><path d="M1396 606.5 q7.5 -2.6 15.0 0 t15.0 -1 l-2.2 -2.2 m2.2 2.2 l-3 1.6" fill="none" stroke="#f4d23c" stroke-width="1.5" opacity=".9"/></g>
<path d="M1126 554 H1134.6 V548.6 L1144.4 567 L1134.6 585.6 V580 H1126 Z" fill="url(#yin)"/>
<path d="M1215 553 Q1228 559 1238 553 L1236.4 550.2 L1245.8 546.4 L1244.8 557 L1241.6 555 Q1229 564 1215 553 Z" fill="#f6c04a"/><path d="M1215 581.8 Q1228 575.8 1238 581.8 L1236.4 584.6 L1245.8 588.4 L1244.8 577.8 L1241.6 579.8 Q1229 570.8 1215 581.8 Z" fill="#f6c04a"/><rect x="1221" y="566.0" width="1.4" height="3.2" fill="#f3b040"/><rect x="1224.4" y="565.4" width="1.8" height="4.4" fill="#f3b040"/><rect x="1228" y="564.6" width="2.2" height="6" fill="#f3b040"/><rect x="1232.2" y="563.6" width="2.6" height="8" fill="#f3b040"/><path d="M1236.4 562.6 H1240.4 V560 L1249.6 567.6 L1240.4 575.4 V572.6 H1236.4 Z" fill="#f7a83a"/>
<rect x="1341.4" y="529.2" width="3.2" height="10.6" fill="#b8bfc6" stroke="#6f777e" stroke-width=".5"/><rect x="1345.6" y="529.2" width="3.4" height="10.6" fill="#cfd5da" stroke="#6f777e" stroke-width=".5"/><rect x="1341.4" y="597" width="3.2" height="8.6" fill="#b8bfc6" stroke="#6f777e" stroke-width=".5"/><rect x="1345.6" y="597" width="3.4" height="8.6" fill="#cfd5da" stroke="#6f777e" stroke-width=".5"/><rect x="1132.6" y="531.6" width="2.8" height="10" fill="#aeb5bc" stroke="#727a81" stroke-width=".4"/><rect x="1132.6" y="594" width="2.8" height="10" fill="#aeb5bc" stroke="#727a81" stroke-width=".4"/>
<path d="M1337 544.6 q17 8 32 1.600 l-1.600 -3.400 l9.600 5.400 l-6.200 8.200 l-.6 -3.800 q-18 3.600 -32.200 -9 Z" fill="#e02828"/><path d="M1337 590.6 q17 -8 32 -1.600 l-1.600 3.400 l9.600 -5.400 l-6.200 -8.200 l-.6 3.800 q-18 -3.600 -32.200 9 Z" fill="#e02828"/><rect x="1346" y="566.4" width="1.6" height="2" fill="#d82424"/><rect x="1349.6" y="565.8" width="2" height="3.2" fill="#d82424"/><rect x="1353.6" y="565.0" width="2.6" height="4.8" fill="#d82424"/><rect x="1358.4" y="564.0" width="3.2" height="6.8" fill="#d82424"/><rect x="1364" y="562.8" width="4" height="9.2" fill="#d82424"/><path d="M1370.6 560 H1373 V556.4 L1383.4 567.4 L1373 578.6 V575 H1370.6 Z" fill="#d82424"/>
<path d="M1475 513.6 L1495 529.6 L1519.400 535.6 V598.6 L1500 601 L1476 620 H1449.6 L1451 602 Q1456 580 1470 567 Q1484 552 1495 529.6 Z" fill="url(#silver)" stroke="#8a8f94" stroke-width=".5"/><path d="M1495 529.6 Q1486 552 1470 567 Q1456 580 1451 602 L1449.6 620 Q1462 600 1480 588 Q1496 570 1500 540 Z" fill="#fff" opacity=".55"/><path d="M1498 534 L1524 536 V599 L1498 601 Q1506 567 1498 534 Z" fill="url(#silver2)" opacity=".85"/><path d="M1494.6 529.8 L1523 535.6 V552 L1486 557 Q1492 543 1494.6 529.8 Z" fill="#7f868d" opacity=".55"/><ellipse cx="1526.6" cy="566.6" rx="6" ry="40" fill="#2b2f33"/><ellipse cx="1529" cy="566.6" rx="5.4" ry="39.4" fill="url(#silver2)"/><ellipse cx="1531" cy="566.6" rx="3.6" ry="35" fill="#d9dcdf"/>
<rect x="1535.2" y="555.6" width="2.6" height="22.8" fill="#f6c21a"/><rect x="1539.6" y="554.8" width="3.2" height="24.4" fill="#f6c21a"/><rect x="1545" y="553.5" width="4.2" height="27.0" fill="#f6c21a"/><path d="M1551.200 552.400 L1565.400 550 V529.600 L1578.800 567.800 L1565.400 606.800 V585.400 L1551.200 583 Z" fill="url(#yarrow)"/>
<path d="M1371.6 428 V447 Q1371.6 451.600 1367 451.600 H1158 Q1153 451.600 1153 456.600 V508" stroke="#777" stroke-width="1" fill="none"/><path d="M1374.400 428 V469.600 Q1374.400 473.600 1370.400 473.600 H1335 Q1331 473.600 1331 477.600 V508" stroke="#777" stroke-width="1" fill="none"/><path d="M1380.600 428 V483.600 Q1380.600 487.600 1384.600 487.600 H1408" stroke="#777" stroke-width="1" fill="none"/><path d="M1281 434.800 H1315 Q1319 434.800 1319 430.800 V428" stroke="#777" stroke-width="1" fill="none"/><path d="M1357.600 398 V438.400 Q1357.600 442.400 1361.600 442.400 H1401" stroke="#8e8e8e" stroke-width="1.6" fill="none"/><path d="M1352 398 V455.200 Q1352 459.200 1356 459.200 H1401" stroke="#a2a2a2" stroke-width="1.6" fill="none"/><rect x="1164.400" y="444.400" width="3.400" height="9.400" fill="#2a6aa8"/><rect x="1318.6" y="416" width="1.3" height="12" fill="#666"/><rect x="1321.3" y="416" width="1.3" height="12" fill="#666"/><rect x="1324.0" y="416" width="1.3" height="12" fill="#666"/><rect x="1326.7" y="416" width="1.3" height="12" fill="#666"/><rect x="1329.4" y="416" width="1.3" height="12" fill="#666"/><rect x="1370.6" y="415.600" width="1.2" height="12.400" fill="#666"/><rect x="1373.2" y="415.600" width="1.2" height="12.400" fill="#666"/><rect x="1375.8" y="415.600" width="1.2" height="12.400" fill="#666"/><rect x="1378.4" y="415.600" width="1.2" height="12.400" fill="#666"/><rect x="1381.0" y="415.600" width="1.2" height="12.400" fill="#666"/><path d="M1313.400 402.600 H1338 L1325.700 411.800 Z" fill="#b4b4b4"/><path d="M1362.600 411.800 H1388 L1375.300 402.400 Z" fill="#b4b4b4"/>
<rect x="1151.6" y="506" width="2.8" height="17" fill="#d3d8dc" stroke="#838b92" stroke-width=".4"/><rect x="1149.4" y="522.6" width="7.200" height="10" fill="#e4e8eb" stroke="#70787f" stroke-width=".5"/><rect x="1147.4" y="531.6" width="11.200" height="4" fill="#aab1b7" stroke="#5f676e" stroke-width=".5"/><rect x="1148" y="535.4" width="10" height="4.6" fill="#8e959b" stroke="#5f676e" stroke-width=".4"/><rect x="1148" y="536.8" width="10" height="2" fill="#2e3338"/><rect x="1151" y="540.2" width="4" height="16" fill="#b9bfc5" stroke="#5d656c" stroke-width=".5"/><rect x="1329.8" y="506" width="2.8" height="17" fill="#d3d8dc" stroke="#838b92" stroke-width=".4"/><rect x="1327.6000000000001" y="522.6" width="7.200" height="10" fill="#e4e8eb" stroke="#70787f" stroke-width=".5"/><rect x="1325.6000000000001" y="531.6" width="11.200" height="4" fill="#aab1b7" stroke="#5f676e" stroke-width=".5"/><rect x="1326.2" y="535.4" width="10" height="4.6" fill="#8e959b" stroke="#5f676e" stroke-width=".4"/><rect x="1326.2" y="536.8" width="10" height="2" fill="#2e3338"/><rect x="1329.2" y="540.2" width="4" height="16" fill="#b9bfc5" stroke="#5d656c" stroke-width=".5"/>
<path d="M1362.400 527 V513.200 Q1362.400 509.200 1366.400 509.200 H1419.600 Q1423.600 509.200 1423.600 505.200 V491.600" stroke="#d9a342" stroke-width="2" fill="none"/><path d="M1494.400 528 V513.200 Q1494.400 509.200 1490.400 509.200 H1436.400 Q1432.400 509.200 1432.400 505.200 V491.600" stroke="#d9a342" stroke-width="2" fill="none"/><rect x="1407.800" y="482.400" width="13" height="9.400" fill="#5e7f88" stroke="#46626a" stroke-width=".5"/><path d="M1420.800 482.400 H1424 L1428.200 472.600 L1432.400 482.400 H1436.400 Q1439.600 482.400 1439.600 487 Q1439.600 491.800 1436.400 491.800 H1420.800 Z" fill="#f4f4f4" stroke="#b8b8b8" stroke-width=".6"/>
<path d="M1404.600 435.4 H1465 L1469.200 443.0 L1465 450.59999999999997 H1404.600 L1400.400 443.0 Z" fill="url(#can)" stroke="#8a8a8a" stroke-width=".7"/><text x="1428.8" y="446.7" text-anchor="middle" font-family="'DejaVu Sans Condensed','Liberation Sans',sans-serif" font-weight="bold" font-size="9.4" textLength="38" lengthAdjust="spacingAndGlyphs" fill="#2a2a2a">Engino CAN</text>
<path d="M1404.600 453.6 H1465 L1469.200 461.20000000000005 L1465 468.8 H1404.600 L1400.400 461.20000000000005 Z" fill="url(#can)" stroke="#8a8a8a" stroke-width=".7"/><text x="1435" y="464.90000000000003" text-anchor="middle" font-family="'DejaVu Sans Condensed','Liberation Sans',sans-serif" font-weight="bold" font-size="9.4" textLength="50" lengthAdjust="spacingAndGlyphs" fill="#2a2a2a">Diagnostic CAN</text>
<g><circle cx="1302.6" cy="315" r="2.6" fill="#d4d6d6" stroke="#8d9090" stroke-width=".6"/><circle cx="1302.6" cy="338" r="2.6" fill="#d4d6d6" stroke="#8d9090" stroke-width=".6"/><circle cx="1302.6" cy="385" r="2.6" fill="#d4d6d6" stroke="#8d9090" stroke-width=".6"/><circle cx="1403" cy="308" r="2.6" fill="#d4d6d6" stroke="#8d9090" stroke-width=".6"/><circle cx="1403" cy="338" r="2.6" fill="#d4d6d6" stroke="#8d9090" stroke-width=".6"/><circle cx="1403" cy="388" r="2.6" fill="#d4d6d6" stroke="#8d9090" stroke-width=".6"/><circle cx="1343.5" cy="300.6" r="2.6" fill="#d4d6d6" stroke="#8d9090" stroke-width=".6"/><circle cx="1342" cy="401" r="2.6" fill="#d4d6d6" stroke="#8d9090" stroke-width=".6"/><circle cx="1355" cy="399" r="2.6" fill="#d4d6d6" stroke="#8d9090" stroke-width=".6"/><rect x="1305" y="302.400" width="97" height="95" rx="4" fill="url(#ecuframe)" stroke="#7e8181" stroke-width=".8"/><rect x="1308.200" y="305.600" width="90.600" height="88.600" rx="3" fill="none" stroke="#9a9d9d" stroke-width=".6" stroke-dasharray="1.4 1.4"/><path d="M1316 310.400 H1393 Q1396.400 310.400 1396.400 313.800 V385 L1392 391 H1316.400 L1312.400 386 V314 Q1312.400 310.400 1316 310.400 Z" fill="#f8e5a6" stroke="#6b6b5e" stroke-width=".9"/><path d="M1337 311 H1363.400 V377 Q1363.400 386 1357 386 H1343.400 Q1337 386 1337 377 Z" fill="#fbeebc" stroke="#d9c68c" stroke-width=".6"/><path d="M1363.400 376 H1388 V311" fill="none" stroke="#e4d196" stroke-width=".6"/><path d="M1343 322 q0 -8 7.400 -9 q7.400 1 7.400 9 l-3 3.400 h-8.800 Z" fill="none" stroke="#d8c488" stroke-width="1.4"/><circle cx="1350.400" cy="319" r="2.400" fill="none" stroke="#d8c488" stroke-width="1"/><text x="1350.200" y="341.400" text-anchor="middle" font-family="'Liberation Sans',sans-serif" font-weight="bold" font-size="6.4" textLength="19" lengthAdjust="spacingAndGlyphs" fill="#c9bf9c">BOSCH</text><rect x="1319.6" y="321" width="13.4" height="24.4" rx="3" fill="#1c1c1c"/><rect x="1321.3" y="322.7" width="10.0" height="21.0" rx="2" fill="#efe6c8"/><rect x="1319.6" y="346" width="13.4" height="27" rx="3" fill="#1c1c1c"/><rect x="1321.3" y="347.7" width="10.0" height="23.6" rx="2" fill="#efe6c8"/><rect x="1366.4" y="321" width="13.4" height="50" rx="3" fill="#1c1c1c"/><rect x="1368.1000000000001" y="322.7" width="10.0" height="46.6" rx="2" fill="#efe6c8"/><circle cx="1324" cy="325.0" r=".8" fill="#333"/><circle cx="1324" cy="327.1" r=".8" fill="#333"/><circle cx="1324" cy="329.2" r=".8" fill="#333"/><circle cx="1324" cy="331.3" r=".8" fill="#333"/><circle cx="1324" cy="333.4" r=".8" fill="#333"/><circle cx="1324" cy="335.5" r=".8" fill="#333"/><circle cx="1324" cy="337.6" r=".8" fill="#333"/><circle cx="1324" cy="339.7" r=".8" fill="#333"/><circle cx="1328.6" cy="325.0" r=".8" fill="#333"/><circle cx="1328.6" cy="327.1" r=".8" fill="#333"/><circle cx="1328.6" cy="329.2" r=".8" fill="#333"/><circle cx="1328.6" cy="331.3" r=".8" fill="#333"/><circle cx="1328.6" cy="333.4" r=".8" fill="#333"/><circle cx="1328.6" cy="335.5" r=".8" fill="#333"/><circle cx="1328.6" cy="337.6" r=".8" fill="#333"/><circle cx="1328.6" cy="339.7" r=".8" fill="#333"/><circle cx="1371.2" cy="325.0" r=".8" fill="#333"/><circle cx="1371.2" cy="327.1" r=".8" fill="#333"/><circle cx="1371.2" cy="329.2" r=".8" fill="#333"/><circle cx="1371.2" cy="331.3" r=".8" fill="#333"/><circle cx="1371.2" cy="333.4" r=".8" fill="#333"/><circle cx="1371.2" cy="335.5" r=".8" fill="#333"/><circle cx="1371.2" cy="337.6" r=".8" fill="#333"/><circle cx="1371.2" cy="339.7" r=".8" fill="#333"/><circle cx="1375.2" cy="325.0" r=".8" fill="#333"/><circle cx="1375.2" cy="327.1" r=".8" fill="#333"/><circle cx="1375.2" cy="329.2" r=".8" fill="#333"/><circle cx="1375.2" cy="331.3" r=".8" fill="#333"/><circle cx="1375.2" cy="333.4" r=".8" fill="#333"/><circle cx="1375.2" cy="335.5" r=".8" fill="#333"/><circle cx="1375.2" cy="337.6" r=".8" fill="#333"/><circle cx="1375.2" cy="339.7" r=".8" fill="#333"/><rect x="1323.600" y="350" width="5.400" height="9" fill="none" stroke="#333" stroke-width=".9"/><path d="M1323 362 l6.600 7 m0 -7 l-6.600 7" stroke="#444" stroke-width=".8"/><path d="M1370 348.0 h6.400" stroke="#b9ae88" stroke-width=".8"/><path d="M1370 351.4 h6.400" stroke="#b9ae88" stroke-width=".8"/><path d="M1370 354.8 h6.400" stroke="#b9ae88" stroke-width=".8"/><path d="M1370 358.2 h6.400" stroke="#b9ae88" stroke-width=".8"/><path d="M1370 361.6 h6.400" stroke="#b9ae88" stroke-width=".8"/><path d="M1370 365.0 h6.400" stroke="#b9ae88" stroke-width=".8"/></g>
<text x="973.8" y="432.6" font-family="'DejaVu Sans Condensed','Liberation Sans',sans-serif" font-size="12.5" textLength="59" lengthAdjust="spacingAndGlyphs" fill="#3a35c4" stroke="#3a35c4" stroke-width=".25">Diesel Engine</text>
<text x="1410.4" y="344.6" font-family="'DejaVu Sans Condensed','Liberation Sans',sans-serif" font-size="12.5" textLength="18.6" lengthAdjust="spacingAndGlyphs" fill="#3a35c4" stroke="#3a35c4" stroke-width=".25">ECU</text>
<text x="1269" y="424.4" font-family="'DejaVu Sans Condensed','Liberation Sans',sans-serif" font-size="12.5" textLength="42" lengthAdjust="spacingAndGlyphs" fill="#3a35c4" stroke="#3a35c4" stroke-width=".25">Actuators</text>
<text x="1394.4" y="419.6" font-family="'DejaVu Sans Condensed','Liberation Sans',sans-serif" font-size="12.5" textLength="34" lengthAdjust="spacingAndGlyphs" fill="#3a35c4" stroke="#3a35c4" stroke-width=".25">Sensors</text>
<text x="1113" y="488" font-family="'DejaVu Sans Condensed','Liberation Sans',sans-serif" font-size="12.5" textLength="26.4" lengthAdjust="spacingAndGlyphs" fill="#3a35c4" stroke="#3a35c4" stroke-width=".25">Temp.</text>
<text x="1113" y="503.4" font-family="'DejaVu Sans Condensed','Liberation Sans',sans-serif" font-size="12.5" textLength="30.4" lengthAdjust="spacingAndGlyphs" fill="#3a35c4" stroke="#3a35c4" stroke-width=".25">Sensor</text>
<text x="1295.2" y="488" font-family="'DejaVu Sans Condensed','Liberation Sans',sans-serif" font-size="12.5" textLength="26.4" lengthAdjust="spacingAndGlyphs" fill="#3a35c4" stroke="#3a35c4" stroke-width=".25">Temp.</text>
<text x="1295.2" y="503.4" font-family="'DejaVu Sans Condensed','Liberation Sans',sans-serif" font-size="12.5" textLength="30.4" lengthAdjust="spacingAndGlyphs" fill="#3a35c4" stroke="#3a35c4" stroke-width=".25">Sensor</text>
<text x="1060" y="527.2" font-family="'DejaVu Sans Condensed','Liberation Sans',sans-serif" font-size="12.5" textLength="30" lengthAdjust="spacingAndGlyphs" fill="#3a35c4" stroke="#3a35c4" stroke-width=".25">Engine</text>
<text x="1060" y="543.8" font-family="'DejaVu Sans Condensed','Liberation Sans',sans-serif" font-size="12.5" textLength="51.8" lengthAdjust="spacingAndGlyphs" fill="#3a35c4" stroke="#3a35c4" stroke-width=".25">Exhaust Gas</text>
<text x="1443.6" y="490.8" font-family="'DejaVu Sans Condensed','Liberation Sans',sans-serif" font-size="12.5" textLength="121" lengthAdjust="spacingAndGlyphs" fill="#3a35c4" stroke="#3a35c4" stroke-width=".25">Differential Pressure Sensor</text>
<text x="1259.8" y="640" font-family="'DejaVu Sans Condensed','Liberation Sans',sans-serif" font-size="12.5" textLength="18.6" lengthAdjust="spacingAndGlyphs" fill="#3a35c4" stroke="#3a35c4" stroke-width=".25">DOC</text>
<text x="1411.8" y="641.6" font-family="'DejaVu Sans Condensed','Liberation Sans',sans-serif" font-size="12.5" textLength="17.6" lengthAdjust="spacingAndGlyphs" fill="#3a35c4" stroke="#3a35c4" stroke-width=".25">DPF</text>
<defs>
<linearGradient id="eng1" x1="0" y1="0" x2="1" y2="1"><stop offset="0" stop-color="#b9bebe"/><stop offset=".5" stop-color="#8f9696"/><stop offset="1" stop-color="#6a7171"/></linearGradient>
<linearGradient id="eng2" x1="0" y1="0" x2="0" y2="1"><stop offset="0" stop-color="#f2f3f3"/><stop offset=".5" stop-color="#cdd1d1"/><stop offset="1" stop-color="#7c8383"/></linearGradient>
<linearGradient id="eng3" x1="0" y1="0" x2="1" y2="0"><stop offset="0" stop-color="#7f8686"/><stop offset=".35" stop-color="#dfe2e2"/><stop offset=".7" stop-color="#b4b9b9"/><stop offset="1" stop-color="#838a8a"/></linearGradient>
<filter id="engnoise" x="0" y="0" width="100%" height="100%"><feTurbulence type="fractalNoise" baseFrequency="0.16" numOctaves="2" seed="7" result="n"/><feColorMatrix in="n" type="matrix" values="0 0 0 0 0  0 0 0 0 0  0 0 0 0 0  3 0 0 0 -1.3" result="a"/><feComposite in="a" in2="SourceAlpha" operator="in"/></filter>
<filter id="engnoise2" x="0" y="0" width="100%" height="100%"><feTurbulence type="fractalNoise" baseFrequency="0.2" numOctaves="2" seed="23" result="n"/><feColorMatrix in="n" type="matrix" values="0 0 0 0 1  0 0 0 0 1  0 0 0 0 1  0 3 0 0 -1.4" result="a"/><feComposite in="a" in2="SourceAlpha" operator="in"/></filter>
</defs>
<g filter="url(#b2)"><polygon points="1047.8,254.5 1090.0,253.4 1093.2,260.8 1089.0,268.2 1089.0,287.2 1096.4,292.5 1106.9,294.6 1110.1,344.2 1105.9,363.2 1096.4,380.1 1089.0,382.2 1074.2,390.6 1065.8,392.7 1062.0,411.7 1044.6,416.4 1019.3,411.7 1014.0,390.6 1002.4,380.1 987.7,369.5 982.4,344.2 990.8,323.1 995.1,306.2 1000.3,293.5 1006.7,287.2 1008.8,280.9 1019.3,276.7 1021.4,266.1 1027.8,264.0 1036.2,261.9" fill="url(#eng1)" opacity="1" /><polygon points="983.4,344.2 990.8,323.1 996.1,306.2 1006.7,302.0 1008.8,380.1 1002.4,380.1 987.7,369.5" fill="#b4b9b9" opacity="1" /><polygon points="986.6,340.0 996.1,329.4 1000.3,363.2 989.8,363.2" fill="#dadddd" opacity="0.85" /><polygon points="994.0,308.3 1006.7,304.1 1006.7,323.1 996.1,325.2" fill="#9aa0a0" opacity="0.9" /><polygon points="1090.0,294.6 1096.4,291.9 1107.5,294.8 1110.1,344.2 1105.9,363.2 1096.4,380.1 1090.0,382.2" fill="#bcc5be" opacity="1" /><polygon points="1092.1,297.8 1101.6,294.0 1104.2,314.6 1094.2,323.1" fill="#e0e5e1" opacity="0.95" /><polygon points="1096.4,325.2 1108.4,318.9 1109.2,344.2 1099.5,350.5" fill="#9eaaa1" opacity="0.95" /><polygon points="1093.2,350.5 1104.8,346.3 1103.7,363.2 1096.4,378.0 1091.5,380.1" fill="#d0d7d1" opacity="0.9" /><polygon points="1090.0,329.4 1096.4,326.3 1097.4,350.5 1091.1,354.8" fill="#4e6456" opacity="0.8" /><polygon points="1101.6,295.7 1107.5,295.2 1108.8,316.8 1104.2,315.7" fill="#8c9a90" opacity="0.8" /><polygon points="1073.8,341.0 1090.0,337.9 1090.7,380.1 1080.5,390.6 1072.5,380.1" fill="#151c17" opacity="1" /><ellipse cx="1082.6" cy="363.2" rx="6.3" ry="10.1" fill="#0a0f0c" opacity="1"/><ellipse cx="1082.6" cy="363.2" rx="3.0" ry="4.6" fill="#3f5246" opacity="1"/><polygon points="1075.3,371.6 1090.0,363.2 1090.7,382.2 1080.5,390.6" fill="#1f3a2a" opacity="0.8" /><rect x="1023.5" y="314.6" width="50.7" height="48.5" rx="3" fill="#7e8585" opacity="0.9" /><rect x="1027.8" y="318.9" width="42.2" height="14.8" rx="2" fill="#a2a8a8" opacity="0.8" /><rect x="1025.7" y="335.8" width="19.0" height="19.0" rx="2" fill="#5f6666" opacity="0.7" /><rect x="1047.8" y="337.9" width="24.3" height="24.3" rx="4" fill="#b9bebe" opacity="0.9" /><rect x="1055.2" y="344.2" width="14.8" height="14.8" rx="8" fill="#d8dbdb" opacity="0.9" /><rect x="1038.3" y="318.9" width="3.8" height="44.3" rx="1" fill="#4c5353" opacity="0.6" /><rect x="1057.7" y="314.6" width="3.4" height="29.5" rx="1" fill="#505757" opacity="0.6" /><rect x="1013.0" y="354.3" width="18.6" height="17.7" rx="2" fill="#c9cdcd" opacity="1" /><rect x="1015.5" y="360.0" width="12.7" height="5.7" rx="2" fill="#0d0f10" opacity="1" /><rect x="1014.7" y="373.7" width="14.8" height="15.6" rx="2" fill="#bcc1c1" opacity="1" /><rect x="1016.2" y="378.0" width="11.0" height="5.5" rx="2" fill="#0f1112" opacity="1" /><polygon points="1014.7,389.4 1064.7,390.6 1062.0,411.7 1044.6,416.4 1019.3,411.7" fill="url(#eng3)" opacity="1" /><rect x="1018.3" y="392.7" width="0.8" height="20.1" rx="0" fill="#6f7676" opacity="0.55" /><rect x="1024.0" y="392.7" width="0.8" height="20.1" rx="0" fill="#6f7676" opacity="0.55" /><rect x="1029.7" y="392.7" width="0.8" height="20.1" rx="0" fill="#6f7676" opacity="0.55" /><rect x="1035.4" y="392.7" width="0.8" height="20.1" rx="0" fill="#6f7676" opacity="0.55" /><rect x="1041.1" y="392.7" width="0.8" height="20.1" rx="0" fill="#6f7676" opacity="0.55" /><rect x="1046.8" y="392.7" width="0.8" height="20.1" rx="0" fill="#6f7676" opacity="0.55" /><rect x="1052.5" y="392.7" width="0.8" height="20.1" rx="0" fill="#6f7676" opacity="0.55" /><rect x="1058.2" y="392.7" width="0.8" height="20.1" rx="0" fill="#6f7676" opacity="0.55" /><rect x="1032.0" y="388.5" width="11.0" height="26.4" rx="5" fill="#eceeee" opacity="1" /><rect x="1038.3" y="390.6" width="3.8" height="23.2" rx="2" fill="#b2b7b7" opacity="0.7" /></g><polygon points="1047.8,254.5 1090.0,253.4 1093.2,260.8 1089.0,268.2 1089.0,287.2 1096.4,292.5 1106.9,294.6 1110.1,344.2 1105.9,363.2 1096.4,380.1 1089.0,382.2 1074.2,390.6 1065.8,392.7 1062.0,411.7 1044.6,416.4 1019.3,411.7 1014.0,390.6 1002.4,380.1 987.7,369.5 982.4,344.2 990.8,323.1 995.1,306.2 1000.3,293.5 1006.7,287.2 1008.8,280.9 1019.3,276.7 1021.4,266.1 1027.8,264.0 1036.2,261.9" fill="#000" filter="url(#engnoise)" opacity=".3"/><polygon points="1047.8,254.5 1090.0,253.4 1093.2,260.8 1089.0,268.2 1089.0,287.2 1096.4,292.5 1106.9,294.6 1110.1,344.2 1105.9,363.2 1096.4,380.1 1089.0,382.2 1074.2,390.6 1065.8,392.7 1062.0,411.7 1044.6,416.4 1019.3,411.7 1014.0,390.6 1002.4,380.1 987.7,369.5 982.4,344.2 990.8,323.1 995.1,306.2 1000.3,293.5 1006.7,287.2 1008.8,280.9 1019.3,276.7 1021.4,266.1 1027.8,264.0 1036.2,261.9" fill="#fff" filter="url(#engnoise2)" opacity=".28"/><g filter="url(#b2)"><rect x="1047.8" y="253.9" width="44.5" height="13.5" rx="7" fill="url(#eng2)" opacity="1" /><rect x="1047.8" y="266.1" width="41.2" height="3.8" rx="3" fill="#4a5050" opacity="0.6" /><rect x="1027.8" y="265.1" width="57.4" height="16.3" rx="8" fill="url(#eng2)" opacity="1" /><rect x="1034.1" y="280.9" width="50.7" height="4.2" rx="3" fill="#3c4242" opacity="0.6" /><ellipse cx="1030.3" cy="273.1" rx="5.5" ry="7.6" fill="#e4e7e7" opacity="1"/><rect x="1025.2" y="272.4" width="7.8" height="35.9" rx="3" fill="#cfd3d3" opacity="1" /><rect x="1025.7" y="298.8" width="44.7" height="14.1" rx="7" fill="url(#eng2)" opacity="1" /><rect x="1026.7" y="312.5" width="43.3" height="3.8" rx="3" fill="#3a4040" opacity="0.55" /><polygon points="1059.0,284.0 1071.0,281.9 1075.9,305.2 1064.7,307.9" fill="#d9dcdc" opacity="1" /><rect x="1055.2" y="270.3" width="25.3" height="13.7" rx="4" fill="#aeb4b4" opacity="0.9" /><ellipse cx="1084.3" cy="280.9" rx="5.1" ry="10.1" fill="#949b9b" opacity="1"/><ellipse cx="1084.8" cy="281.3" rx="2.5" ry="5.5" fill="#2e3333" opacity="1"/><ellipse cx="1085.2" cy="285.1" rx="1.3" ry="2.1" fill="#a83030" opacity="0.9"/><rect x="1032.4" y="276.7" width="16.9" height="21.5" rx="3" fill="#14171a" opacity="1" /><rect x="1037.5" y="259.4" width="10.6" height="6.8" rx="5" fill="#1e2224" opacity="1" /><rect x="1049.3" y="268.6" width="6.3" height="10.1" rx="2" fill="#30363a" opacity="0.9" /><rect x="1067.9" y="259.8" width="16.9" height="6.3" rx="3" fill="#5d6464" opacity="0.7" /><rect x="1049.9" y="284.0" width="9.5" height="13.7" rx="2" fill="#3a3f42" opacity="0.8" /><rect x="1069.6" y="306.2" width="4.2" height="12.7" rx="1" fill="#8c2a2a" opacity="0.7" /><rect x="1008.3" y="279.8" width="14.8" height="9.9" rx="3" fill="#b59453" opacity="1" /><rect x="1010.9" y="283.0" width="9.5" height="5.3" rx="2" fill="#6e5a30" opacity="0.6" /><rect x="1031.6" y="286.2" width="9.3" height="7.0" rx="3" fill="#bfa060" opacity="1" /><rect x="1042.1" y="284.0" width="11.4" height="9.1" rx="3" fill="#b89858" opacity="1" /><rect x="1006.2" y="298.8" width="8.0" height="24.7" rx="5" fill="#f5f6f6" opacity="1" /><rect x="1006.7" y="323.5" width="7.2" height="4.9" rx="2" fill="#70777a" opacity="0.8" /><polyline points="1020.4,267.8 1020.0,314.6 1029.9,337.9 1044.6,363.2" fill="none" stroke="#15181a" stroke-width="1.1" opacity="1" stroke-linecap="round" stroke-linejoin="round"/><polyline points="1022.5,283.0 1024.0,314.6" fill="none" stroke="#20262a" stroke-width="0.9" opacity="1" stroke-linecap="round" stroke-linejoin="round"/><rect x="995.3" y="305.2" width="2.5" height="7.0" rx="2" fill="#1a1d20" opacity="0.9" /></g><ellipse cx="1021.9" cy="265.1" rx="1.4" ry="2.3" fill="none" stroke="#c83c3c" stroke-width=".7"/>
</svg>
<div class="abs" style="left:0;top:829px;width:1600px;height:24px;background:#f0f0f0"></div>
<div class="abs" style="left:0;top:829.6px;width:1600px;height:1px;background:#e1e1e1"></div>
<div class="abs" style="left:0;top:850.4px;width:1600px;height:2.6px;background:linear-gradient(to right,#d9d9d9,#dedede 40%,#e2e2e2)"></div>
<div class="abs" style="left:1268.6px;top:833.6px;width:75px;height:15px;background:#e6e6e6;border:1px solid #bcbcbc"></div>
<div class="abs" style="left:1506.6px;top:832px;width:1px;height:17px;background:#dadada"></div>
<div class="abs" style="left:1534.4px;top:832px;width:1px;height:17px;background:#dadada"></div>
<div class="abs" style="left:1567.6px;top:832px;width:1px;height:17px;background:#dadada"></div>
<div class="abs sb" style="left:1511.6px;transform:scaleX(.826);color:#111;-webkit-text-stroke:.3px #111">CAP</div>
<div class="abs sb" style="left:1538.8px;transform:scaleX(.952);color:#111;-webkit-text-stroke:.3px #111">NUM</div>
<div class="abs sb" style="left:1572px;transform:scaleX(.78);color:#8c8c8c">SCRL</div>
</div>
</body>
</html>
